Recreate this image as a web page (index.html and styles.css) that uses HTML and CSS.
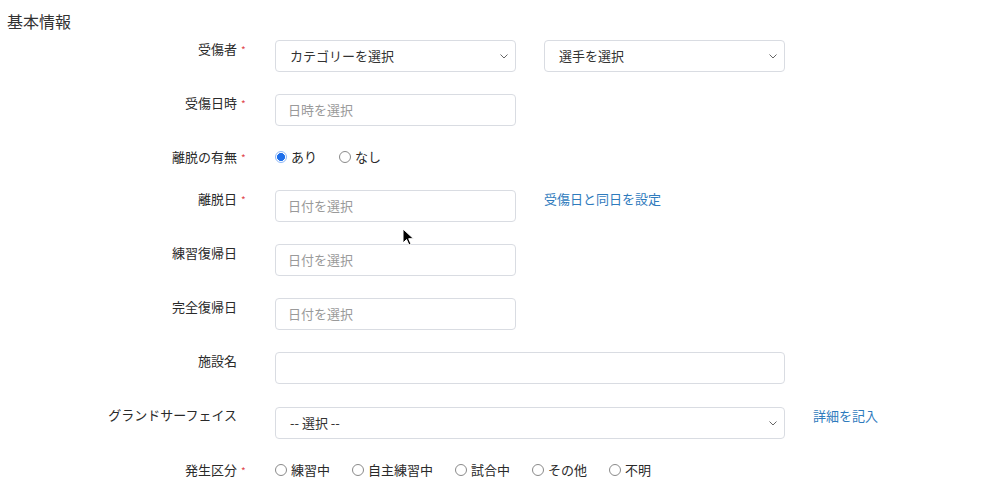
FILE: index.html
```html
<!DOCTYPE html>
<html lang="ja">
<head>
<meta charset="utf-8">
<title>基本情報</title>
<link rel="stylesheet" href="styles.css">
</head>
<body>
<div class="page">
  <h2 class="title">基本情報</h2>
  <form class="form">
    <div class="row">
      <label class="label req">受傷者</label>
      <div class="controls">
        <div class="select half"><span class="value">カテゴリーを選択</span><svg class="chev" width="8" height="5" viewBox="0 0 8 5"><path d="M0.5 0.5 L4 4 L7.5 0.5" fill="none" stroke="#666" stroke-width="1"/></svg></div>
        <div class="select half"><span class="value">選手を選択</span><svg class="chev" width="8" height="5" viewBox="0 0 8 5"><path d="M0.5 0.5 L4 4 L7.5 0.5" fill="none" stroke="#666" stroke-width="1"/></svg></div>
      </div>
    </div>
    <div class="row">
      <label class="label req">受傷日時</label>
      <div class="controls">
        <div class="input half"><span class="ph">日時を選択</span></div>
      </div>
    </div>
    <div class="row row-radio">
      <label class="label req">離脱の有無</label>
      <div class="radios">
        <span class="radio"><span class="dot on"></span>あり</span>
        <span class="radio"><span class="dot"></span>なし</span>
      </div>
    </div>
    <div class="row">
      <label class="label req">離脱日</label>
      <div class="controls">
        <div class="input half"><span class="ph">日付を選択</span></div>
        <a class="link">受傷日と同日を設定</a>
      </div>
    </div>
    <div class="row">
      <label class="label">練習復帰日</label>
      <div class="controls">
        <div class="input half"><span class="ph">日付を選択</span></div>
      </div>
    </div>
    <div class="row">
      <label class="label">完全復帰日</label>
      <div class="controls">
        <div class="input half"><span class="ph">日付を選択</span></div>
      </div>
    </div>
    <div class="row">
      <label class="label">施設名</label>
      <div class="controls">
        <div class="input full"></div>
      </div>
    </div>
    <div class="row row-select">
      <label class="label">グランドサーフェイス</label>
      <div class="controls">
        <div class="select full"><span class="value">-- 選択 --</span><svg class="chev" width="8" height="5" viewBox="0 0 8 5"><path d="M0.5 0.5 L4 4 L7.5 0.5" fill="none" stroke="#666" stroke-width="1"/></svg></div>
        <a class="link">詳細を記入</a>
      </div>
    </div>
    <div class="row row-radio">
      <label class="label req">発生区分</label>
      <div class="radios">
        <span class="radio"><span class="dot"></span>練習中</span>
        <span class="radio"><span class="dot"></span>自主練習中</span>
        <span class="radio"><span class="dot"></span>試合中</span>
        <span class="radio"><span class="dot"></span>その他</span>
        <span class="radio"><span class="dot"></span>不明</span>
      </div>
    </div>
  </form>
  <svg class="cursor" width="13" height="19" viewBox="0 0 13 19"><path d="M1 1 L1 15 L4.5 11.5 L7 17 L9 16 L6.7 10.7 L11.5 10.7 Z" fill="#000" stroke="#fff" stroke-width="1" stroke-linejoin="round"/></svg>
</div>
</body>
</html>
```
FILE: styles.css
```css
html, body {
  margin: 0;
  padding: 0;
  background: #fff;
}
body {
  font-family: "Noto Sans CJK JP", "Noto Sans", "Liberation Sans", sans-serif;
  color: #333;
  font-size: 13px;
}
.page {
  position: relative;
  padding: 10px 7px 0;
  height: 474px;
  overflow: hidden;
}
.title {
  margin: 0;
  font-size: 16px;
  font-weight: normal;
  line-height: 22px;
  color: #333;
}
.form {
  margin-top: 8px;
}
.row {
  display: grid;
  grid-template-columns: 230px 1fr;
  column-gap: 38px;
  margin-bottom: 22px;
  align-items: start;
}
.row-select {
  padding-top: 1px;
}
.row-radio {
  min-height: 20px;
}
.label {
  position: relative;
  text-align: right;
  line-height: 18px;
  color: #2a2a2a;
}
.row-select .label {
  margin-top: -1px;
}
.req::after {
  content: "*";
  position: absolute;
  left: calc(100% + 4px);
  top: 1px;
  color: #e0474c;
  font-size: 10px;
}
.controls {
  display: flex;
  align-items: flex-start;
  gap: 28px;
}
.input, .select {
  position: relative;
  box-sizing: border-box;
  height: 32px;
  border: 1px solid #d9dce2;
  border-radius: 4px;
  background: #fff;
  display: flex;
  align-items: center;
  padding-left: 12px;
  padding-bottom: 2px;
}
.select {
  padding-left: 14px;
}
.half { width: 241px; }
.full { width: 510px; }
.ph {
  color: #9a9a9a;
}
.value {
  color: #333;
}
.chev {
  position: absolute;
  right: 7px;
  top: 13px;
}
.link {
  color: #2f7bbd;
  line-height: 18px;
  text-decoration: none;
}
.radios {
  display: flex;
  gap: 22px;
  line-height: 18px;
}
.radio {
  display: flex;
  align-items: center;
  gap: 4px;
  color: #2a2a2a;
}
.dot {
  box-sizing: border-box;
  width: 12px;
  height: 12px;
  border-radius: 50%;
  border: 1px solid #8a8a8a;
  background: #fff;
}
.dot.on {
  border: 1.5px solid #8fb8f6;
  background: radial-gradient(circle, #1f6fea 0 3.6px, #3b82f0 3.6px 4.3px, #fff 4.3px);
}
.cursor {
  position: absolute;
  left: 402px;
  top: 228px;
}
```
